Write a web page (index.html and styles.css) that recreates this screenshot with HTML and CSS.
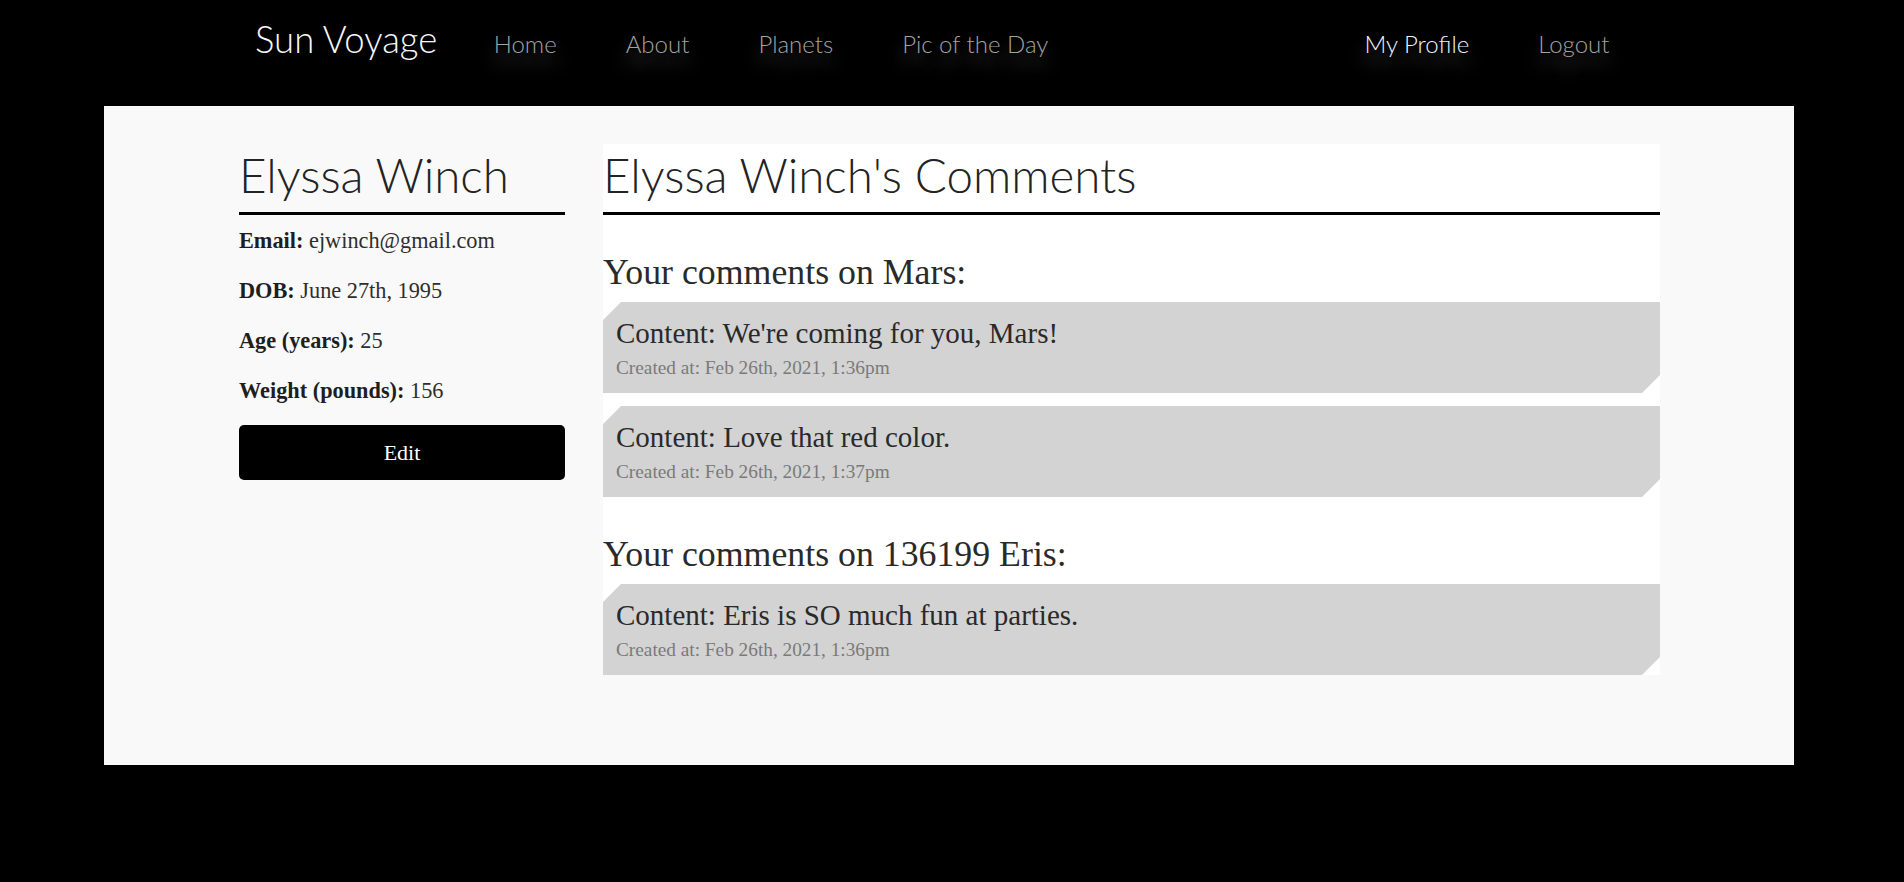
FILE: index.html
```html
<!DOCTYPE html>
<html lang="en">
<head>
<meta charset="utf-8">
<title>Sun Voyage - Profile</title>
<link rel="stylesheet" href="styles.css">
</head>
<body>
<header class="topbar">
  <nav class="nav">
    <a class="brand" href="#">Sun Voyage</a>
    <ul class="nav-list">
      <li><a class="nav-link" href="#">Home</a></li>
      <li><a class="nav-link" href="#">About</a></li>
      <li><a class="nav-link" href="#">Planets</a></li>
      <li><a class="nav-link" href="#">Pic of the Day</a></li>
    </ul>
    <ul class="nav-list nav-right">
      <li><a class="nav-link active" href="#">My Profile</a></li>
      <li><a class="nav-link" href="#">Logout</a></li>
    </ul>
  </nav>
</header>
<main class="panel">
  <aside class="profile">
    <h1 class="title">Elyssa Winch</h1>
    <p class="field"><b>Email:</b> ejwinch@gmail.com</p>
    <p class="field"><b>DOB:</b> June 27th, 1995</p>
    <p class="field"><b>Age (years):</b> 25</p>
    <p class="field"><b>Weight (pounds):</b> 156</p>
    <button class="edit-btn" type="button">Edit</button>
  </aside>
  <section class="comments">
    <h1 class="title">Elyssa Winch's Comments</h1>
    <div class="group">
      <h2 class="group-title">Your comments on Mars:</h2>
      <article class="comment">
        <p class="comment-content">Content: We're coming for you, Mars!</p>
        <p class="comment-date">Created at: Feb 26th, 2021, 1:36pm</p>
      </article>
      <article class="comment">
        <p class="comment-content">Content: Love that red color.</p>
        <p class="comment-date">Created at: Feb 26th, 2021, 1:37pm</p>
      </article>
    </div>
    <div class="group">
      <h2 class="group-title">Your comments on 136199 Eris:</h2>
      <article class="comment">
        <p class="comment-content">Content: Eris is SO much fun at parties.</p>
        <p class="comment-date">Created at: Feb 26th, 2021, 1:36pm</p>
      </article>
    </div>
  </section>
</main>
</body>
</html>
```
FILE: styles.css
```css
html, body {
  margin: 0;
  padding: 0;
  background: #000;
}

body {
  min-height: 882px;
  font-family: "Liberation Serif", serif;
  color: #2a2a2a;
}

/* ---------- top navigation ---------- */
.topbar {
  background: #000;
}

.nav {
  display: flex;
  align-items: baseline;
  height: 106px;
  box-sizing: border-box;
  padding: 18px 0 0 255px;
  font-family: "Lato", "DejaVu Sans", sans-serif;
  font-weight: 300;
}

.brand {
  font-size: 36.5px;
  line-height: 42px;
  color: #f4f8fc;
  text-decoration: none;
  margin-right: 22px;
}

.nav-list {
  display: flex;
  align-items: baseline;
  list-style: none;
  margin: 0;
  padding: 0;
}

.nav-right {
  margin-left: auto;
  margin-right: 260px;
}

.nav-link {
  display: block;
  padding: 0 34.5px;
  font-size: 24px;
  line-height: 30px;
  color: #a3a3a3;
  text-decoration: none;
  text-shadow: 0 12px 18px rgba(255, 255, 255, 0.4);
}

.nav-link.active {
  color: #eef4fa;
}

/* ---------- main panel ---------- */
.panel {
  display: flex;
  align-items: flex-start;
  gap: 38px;
  width: 1690px;
  margin-left: 104px;
  box-sizing: border-box;
  padding: 38px 134px 90px 135px;
  background: #f9f9f9;
}

.title {
  margin: 0;
  padding-bottom: 6px;
  border-bottom: 3px solid #000;
  font-family: "Lato", "DejaVu Sans", sans-serif;
  font-weight: 300;
  font-size: 47.5px;
  line-height: 62px;
  color: #232323;
}

/* ---------- profile column ---------- */
.profile {
  flex: none;
  width: 326px;
}

.field {
  margin: 0 0 24px;
  font-size: 22.3px;
  line-height: 26px;
  color: #2e2e2e;
}

.field:first-of-type {
  margin-top: 13px;
}

.field b {
  color: #1e1e1e;
}

.edit-btn {
  display: block;
  width: 100%;
  height: 55px;
  margin-top: -3px;
  border: 0;
  border-radius: 5px;
  background: #000;
  color: #fff;
  font-family: "Liberation Serif", serif;
  font-size: 22px;
  line-height: 55px;
  padding: 0;
}

/* ---------- comments column ---------- */
.comments {
  flex: 1;
  background: #fff;
}

.group-title {
  margin: 37px 0 10px;
  font-weight: normal;
  font-size: 35.8px;
  line-height: 40px;
  color: #2a2a2a;
}

.comment {
  height: 91px;
  box-sizing: border-box;
  padding: 13px;
  background: #d3d3d3;
  clip-path: polygon(18px 0, 100% 0, 100% calc(100% - 18px), calc(100% - 18px) 100%, 0 100%, 0 18px);
}

.comment + .comment {
  margin-top: 13px;
}

.comment-content {
  margin: 0;
  font-size: 29px;
  line-height: 36px;
  color: #2a2a2a;
}

.comment-date {
  margin: 5px 0 0;
  font-size: 19.3px;
  line-height: 24px;
  color: #7a7a7a;
}
```
